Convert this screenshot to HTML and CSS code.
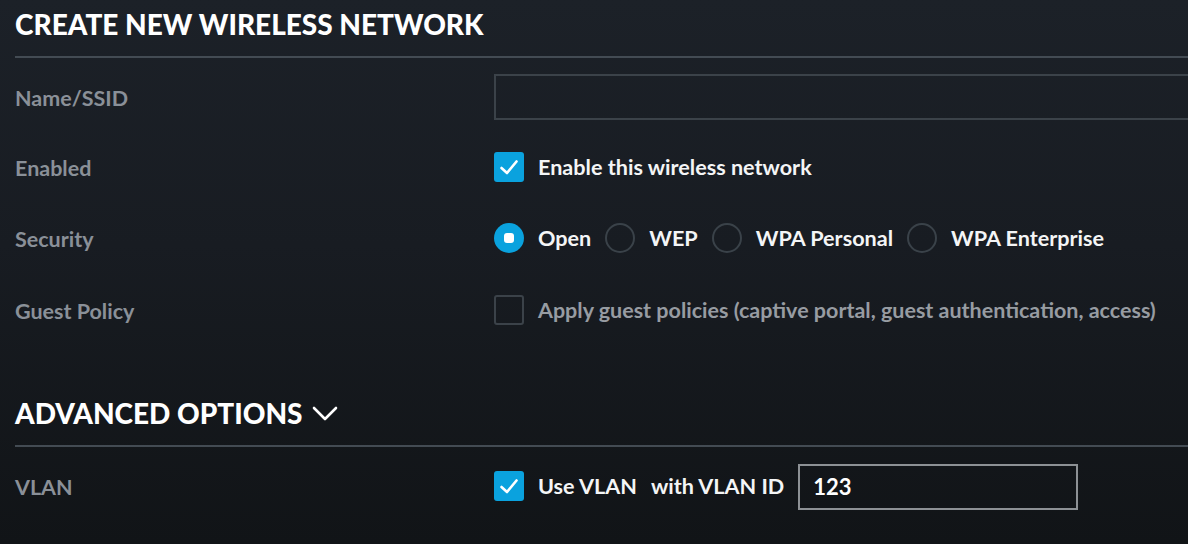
FILE: index.html
```html
<!DOCTYPE html>
<html>
<head>
<meta charset="utf-8">
<link rel="stylesheet" href="styles.css">
</head>
<body>
<div class="page">
  <h1 class="section-title">CREATE NEW WIRELESS NETWORK</h1>

  <div class="row row-name">
    <div class="label">Name/SSID</div>
    <div class="control"><div class="text-input wide"></div></div>
  </div>

  <div class="row row-a">
    <div class="label">Enabled</div>
    <div class="control">
      <span class="checkbox checked"><svg viewBox="0 0 30 30" width="30" height="30"><polyline points="7.5,16 13,21 22.5,9.5" fill="none" stroke="#fff" stroke-width="2.6" stroke-linecap="round" stroke-linejoin="round"/></svg></span>
      <span class="opt-text">Enable this wireless network</span>
    </div>
  </div>

  <div class="row row-b">
    <div class="label">Security</div>
    <div class="control radios">
      <span class="radio on"></span><span class="opt-text">Open</span>
      <span class="radio"></span><span class="opt-text">WEP</span>
      <span class="radio"></span><span class="opt-text">WPA Personal</span>
      <span class="radio"></span><span class="opt-text">WPA Enterprise</span>
    </div>
  </div>

  <div class="row row-b">
    <div class="label">Guest Policy</div>
    <div class="control">
      <span class="checkbox"></span>
      <span class="opt-text muted">Apply guest policies (captive portal, guest authentication, access)</span>
    </div>
  </div>

  <h2 class="section-title advanced">ADVANCED OPTIONS
    <svg class="chevron" viewBox="0 0 26 16" width="26" height="16"><polyline points="2,2 13,13 24,2" fill="none" stroke="#fff" stroke-width="2.6" stroke-linecap="round" stroke-linejoin="round"/></svg>
  </h2>

  <div class="row row-vlan">
    <div class="label">VLAN</div>
    <div class="control">
      <span class="checkbox checked"><svg viewBox="0 0 30 30" width="30" height="30"><polyline points="7.5,16 13,21 22.5,9.5" fill="none" stroke="#fff" stroke-width="2.6" stroke-linecap="round" stroke-linejoin="round"/></svg></span>
      <span class="opt-text">Use VLAN</span>
      <span class="opt-text with">with VLAN ID</span>
      <div class="text-input vlan-input">123</div>
    </div>
  </div>
</div>
</body>
</html>
```

FILE: styles.css
```css
html, body {
  margin: 0;
  padding: 0;
}
body {
  width: 1188px;
  height: 544px;
  overflow: hidden;
  background: linear-gradient(180deg, #1c2128 0%, #181c22 45%, #111417 100%);
  font-family: Lato, "Open Sans", sans-serif;
}
.page {
  padding-left: 15px;
}
.section-title {
  margin: 0;
  font-size: 28px;
  font-weight: 900;
  letter-spacing: 0;
  line-height: 48px;
  color: #ffffff;
  padding-bottom: 8px;
  border-bottom: 2px solid #434b53;
  display: flex;
  align-items: center;
}
.advanced {
  margin-top: 43px;
}
.chevron {
  margin-left: 9px;
  margin-top: 2px;
}
.row {
  display: flex;
  align-items: center;
}
.row-name { height: 46px; margin-top: 16px; margin-bottom: 12px; }
.row-a { height: 70px; }
.row-b { height: 72px; }
.row-vlan { height: 78px; }
.label {
  width: 479px;
  flex: none;
  font-size: 21.5px;
  font-weight: 700;
  color: #8a9098;
  padding-top: 1px;
}
.control {
  flex: 1;
  display: flex;
  align-items: center;
  min-width: 0;
}
.text-input {
  box-sizing: border-box;
  height: 46px;
  border: 2px solid #3b4249;
  background: transparent;
}
.wide {
  flex: 1;
  margin-right: -20px;
}
.checkbox {
  box-sizing: border-box;
  width: 30px;
  height: 30px;
  border-radius: 3px;
  border: 2px solid #3b4249;
  flex: none;
  display: block;
  margin-right: 14px;
}
.checkbox.checked {
  border: none;
  background: #0aa2de;
}
.checkbox svg { display: block; }
.radio {
  box-sizing: border-box;
  width: 30px;
  height: 30px;
  border-radius: 50%;
  border: 2px solid #3a4249;
  flex: none;
  margin-right: 14px;
  position: relative;
}
.radio.on {
  border: none;
  background: #0aa2de;
}
.radio.on::after {
  content: "";
  position: absolute;
  left: 10px;
  top: 10px;
  width: 10px;
  height: 10px;
  border-radius: 3px;
  background: #fff;
}
.radios .opt-text { margin-right: 14px; }
.opt-text {
  font-size: 21.6px;
  font-weight: 700;
  color: #f4f5f6;
  white-space: nowrap;
}
.opt-text.muted {
  color: #979ca2;
  font-size: 21.5px;
}
.with {
  margin-left: 14px;
}
.vlan-input {
  width: 280px;
  margin-left: 14px;
  border-color: #8d9195;
  color: #ffffff;
  font-size: 22px;
  font-weight: 700;
  line-height: 42px;
  padding-left: 13px;
  margin-top: 1px;
}
```
